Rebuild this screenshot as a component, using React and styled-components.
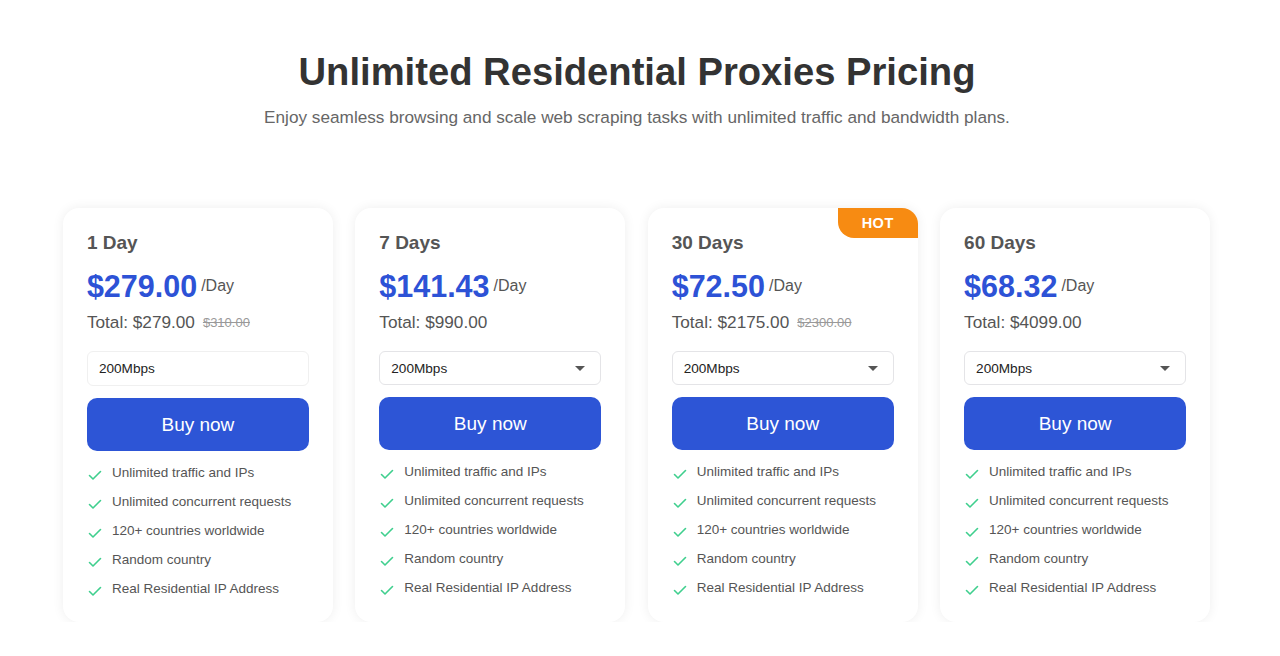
import React from 'react';
import styled, { createGlobalStyle } from 'styled-components';

const GlobalStyle = createGlobalStyle`
  body {
    margin: 0;
    background: #ffffff;
    font-family: 'Liberation Sans', Arial, sans-serif;
  }
`;

const Page = styled.div`
  width: 1280px;
  padding-top: 50px;
  display: flex;
  flex-direction: column;
  align-items: center;
`;

const Heading = styled.h1`
  margin: 0 0 0 -6px;
  font-size: 38.2px;
  font-weight: 700;
  color: #333333;
  line-height: 44px;
`;

const Subtitle = styled.p`
  margin: 12px 0 0 -6px;
  font-size: 17.2px;
  color: #666666;
  line-height: 22px;
`;

const Cards = styled.div`
  margin-top: 80px;
  display: grid;
  grid-template-columns: repeat(4, 270px);
  gap: 22.4px;
  margin-left: -7px;
`;

const Card = styled.div`
  position: relative;
  background: #fff;
  border-radius: 16px;
  box-shadow: 0 0 12px rgba(0, 0, 0, 0.07);
  padding: 24px 24px 24px;
  display: flex;
  flex-direction: column;
`;

const Badge = styled.div`
  position: absolute;
  top: 0;
  right: 0;
  width: 80px;
  height: 30px;
  background: #f78b12;
  color: #fff;
  font-size: 14.5px;
  font-weight: 700;
  display: flex;
  align-items: center;
  justify-content: center;
  border-radius: 0 16px 0 16px;
  letter-spacing: 0.5px;
`;

const PlanName = styled.div`
  font-size: 19px;
  font-weight: 700;
  color: #555;
  line-height: 22px;
`;

const PriceRow = styled.div`
  margin-top: 16px;
  display: flex;
  align-items: center;
  gap: 4px;
`;

const Price = styled.span`
  font-size: 30.5px;
  font-weight: 700;
  color: #2d52d6;
  line-height: 32px;
`;

const Per = styled.span`
  font-size: 16px;
  color: #555;
  margin-top: -1px;
`;

const TotalRow = styled.div`
  margin-top: 8px;
  height: 24px;
  display: flex;
  align-items: center;
  gap: 8px;
  font-size: 17.2px;
  color: #555;
`;

const OldPrice = styled.span`
  font-size: 13px;
  color: #999;
  text-decoration: line-through;
  margin-top: 1px;
`;

const Select = styled.div`
  margin-top: 17px;
  height: ${p => (p.$plain ? 35 : 34)}px;
  box-sizing: border-box;
  border: 1px solid ${p => (p.$plain ? '#f0f0f0' : '#e4e4e7')};
  border-radius: 6px;
  padding: 0 11px;
  display: flex;
  align-items: center;
  justify-content: space-between;
  font-size: 13.6px;
  color: #222;
`;

const Caret = styled.span`
  width: 0;
  height: 0;
  border-left: 5px solid transparent;
  border-right: 5px solid transparent;
  border-top: 5px solid #555;
  margin-right: 4px;
`;

const BuyButton = styled.button`
  margin-top: 12px;
  height: 53px;
  border: none;
  border-radius: 10px;
  background: #2d55d6;
  color: #fff;
  font-family: inherit;
  font-size: 19px;
  cursor: pointer;
`;

const Features = styled.ul`
  list-style: none;
  margin: 13px 0 0;
  padding: 0;
  display: flex;
  flex-direction: column;
  gap: 11px;
`;

const Feature = styled.li`
  display: flex;
  align-items: center;
  gap: 10px;
  font-size: 13.5px;
  color: #555;
  line-height: 18px;
  padding-left: 1px;
`;

const Check = () => (
  <svg width="14" height="14" viewBox="0 0 14 14" style={{ marginTop: 4 }}>
    <path d="M1.5 7.5 L5 11 L12.5 3.5" fill="none" stroke="#3fcf8e" strokeWidth="1.6" strokeLinecap="round" strokeLinejoin="round" />
  </svg>
);

const features = [
  'Unlimited traffic and IPs',
  'Unlimited concurrent requests',
  '120+ countries worldwide',
  'Random country',
  'Real Residential IP Address',
];

const plans = [
  { name: '1 Day', price: '$279.00', total: '$279.00', old: '$310.00', plain: true },
  { name: '7 Days', price: '$141.43', total: '$990.00' },
  { name: '30 Days', price: '$72.50', total: '$2175.00', old: '$2300.00', hot: true },
  { name: '60 Days', price: '$68.32', total: '$4099.00' },
];

export default function App() {
  return (
    <Page>
      <GlobalStyle />
      <Heading>Unlimited Residential Proxies Pricing</Heading>
      <Subtitle>Enjoy seamless browsing and scale web scraping tasks with unlimited traffic and bandwidth plans.</Subtitle>
      <Cards>
        {plans.map(plan => (
          <Card key={plan.name}>
            {plan.hot && <Badge>HOT</Badge>}
            <PlanName>{plan.name}</PlanName>
            <PriceRow>
              <Price>{plan.price}</Price>
              <Per>/Day</Per>
            </PriceRow>
            <TotalRow>
              <span>Total: {plan.total}</span>
              {plan.old && <OldPrice>{plan.old}</OldPrice>}
            </TotalRow>
            <Select $plain={plan.plain}>
              <span>200Mbps</span>
              {!plan.plain && <Caret />}
            </Select>
            <BuyButton>Buy now</BuyButton>
            <Features>
              {features.map(f => (
                <Feature key={f}>
                  <Check />
                  <span>{f}</span>
                </Feature>
              ))}
            </Features>
          </Card>
        ))}
      </Cards>
    </Page>
  );
}
